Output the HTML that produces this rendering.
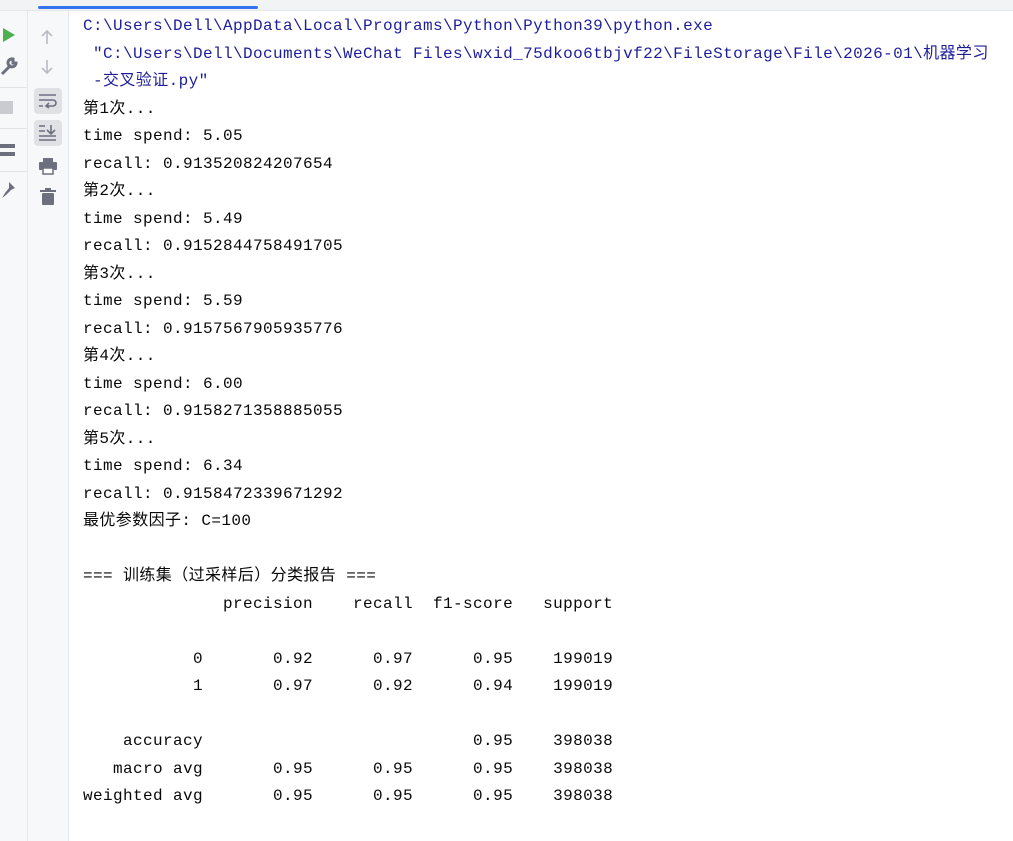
<!DOCTYPE html>
<html><head><meta charset="utf-8"><style>
html,body{margin:0;padding:0;width:1013px;height:841px;overflow:hidden;background:#fff;font-family:"Liberation Mono","Noto Sans CJK SC",monospace;}
.top{position:absolute;left:0;top:0;width:1013px;height:10px;background:#f2f3f5;border-bottom:1px solid #e4e5e8;}
.tab{position:absolute;left:38px;top:6px;width:220px;height:3px;background:#3574f0;border-radius:2px;}
.g1{position:absolute;left:0;top:11px;width:27px;height:830px;background:#f7f8fa;border-right:1px solid #e6e7ea;}
.g2{position:absolute;left:28px;top:11px;width:40px;height:830px;background:#f7f8fa;border-right:1px solid #e6e7ea;}
.sep{position:absolute;left:0;width:27px;height:1px;background:#e2e3e6;}
pre{position:absolute;left:83px;top:13px;margin:0;font-family:"Liberation Mono","Noto Sans CJK SC",monospace;font-size:16px;letter-spacing:0.4px;line-height:27.5px;color:#080808;}
.b{color:#1d1d9c;}
.btn{position:absolute;left:34px;width:28px;height:26px;background:#dfe1e5;border-radius:4px;}
</style></head><body>
<div class="top"></div><div class="tab"></div>
<div class="g1">
<svg style="position:absolute;left:2px;top:16px" width="14" height="16"><path d="M1 1 L13 8 L1 15Z" fill="#4caf50"/></svg>
<svg style="position:absolute;left:0px;top:46px" width="18" height="20"><path d="M13 2 a4 4 0 1 0 3 4 l-3 0 l0-3z M11 8 L2 17" stroke="#6c707e" stroke-width="3" fill="none"/></svg>
<div class="sep" style="top:76px"></div>
<div style="position:absolute;left:0;top:90px;width:13px;height:13px;background:#c9cbd0"></div>
<div class="sep" style="top:117px"></div>
<div style="position:absolute;left:0;top:133px;width:15px;height:12px;border-top:4px solid #6c707e;border-bottom:4px solid #6c707e;box-sizing:border-box"></div>
<div class="sep" style="top:160px"></div>
<svg style="position:absolute;left:0;top:170px" width="16" height="18"><path d="M9 1 L15 7 L11 9 L6 14 L2 17 L5 12 L9 7Z" fill="#6c707e"/></svg>
</div>
<div class="g2">
<svg style="position:absolute;left:12px;top:18px" width="14" height="16"><path d="M7 15 V2 M2 7 L7 2 L12 7" stroke="#b8bbc2" stroke-width="1.6" fill="none"/></svg>
<svg style="position:absolute;left:12px;top:48px" width="14" height="16"><path d="M7 1 V14 M2 9 L7 14 L12 9" stroke="#b8bbc2" stroke-width="1.6" fill="none"/></svg>
</div>
<div class="btn" style="top:88px"></div>
<svg style="position:absolute;left:38px;top:93px" width="20" height="16"><path d="M1 2 H18 M1 7 H15 a3 3 0 0 1 0 6 H9 M11 10 L8 13 L11 15 M1 13 H5" stroke="#6c707e" stroke-width="1.6" fill="none"/></svg>
<div class="btn" style="top:120px"></div>
<svg style="position:absolute;left:38px;top:124px" width="20" height="18"><path d="M1 2 H7 M1 7 H7 M1 12 H18 M1 16 H18 M13 1 V9 M9 6 L13 10 L17 6" stroke="#6c707e" stroke-width="1.6" fill="none"/></svg>
<svg style="position:absolute;left:38px;top:157px" width="20" height="18"><rect x="5" y="1" width="10" height="4" fill="#6c707e"/><rect x="1" y="5" width="18" height="8" rx="1" fill="#6c707e"/><rect x="5" y="11" width="10" height="6" fill="#fff" stroke="#6c707e" stroke-width="1.5"/></svg>
<svg style="position:absolute;left:40px;top:188px" width="16" height="18"><rect x="0" y="2" width="16" height="2" fill="#6c707e"/><rect x="5" y="0" width="6" height="2" fill="#6c707e"/><rect x="2" y="5" width="12" height="12" rx="1" fill="#6c707e"/></svg>
<pre><span class="b">C:\Users\Dell\AppData\Local\Programs\Python\Python39\python.exe
 "C:\Users\Dell\Documents\WeChat Files\wxid_75dkoo6tbjvf22\FileStorage\File\2026-01\机器学习
 -交叉验证.py"</span>
第1次...
time spend: 5.05
recall: 0.913520824207654
第2次...
time spend: 5.49
recall: 0.9152844758491705
第3次...
time spend: 5.59
recall: 0.9157567905935776
第4次...
time spend: 6.00
recall: 0.9158271358885055
第5次...
time spend: 6.34
recall: 0.9158472339671292
最优参数因子: C=100

=== 训练集（过采样后）分类报告 ===
              precision    recall  f1-score   support

           0       0.92      0.97      0.95    199019
           1       0.97      0.92      0.94    199019

    accuracy                           0.95    398038
   macro avg       0.95      0.95      0.95    398038
weighted avg       0.95      0.95      0.95    398038
</pre>
</body></html>
